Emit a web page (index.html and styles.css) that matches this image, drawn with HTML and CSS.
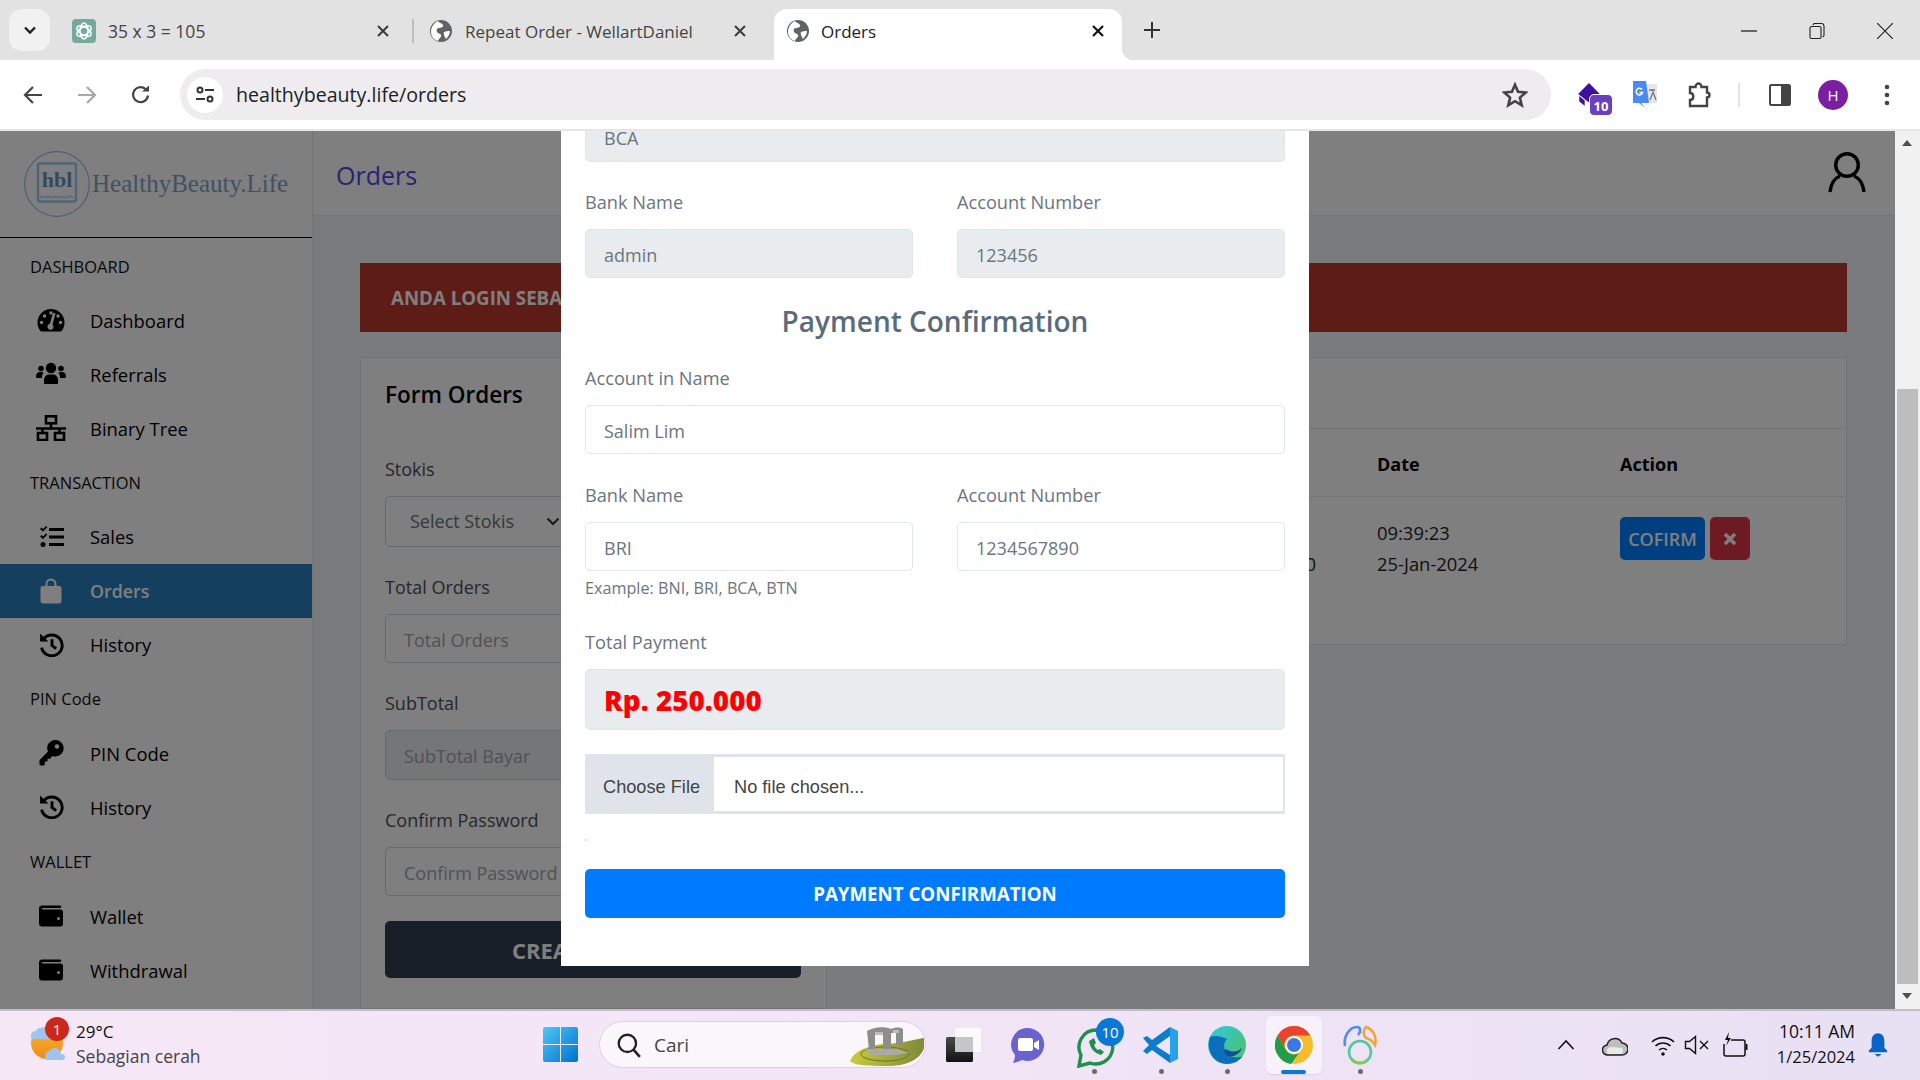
FILE: index.html
```html
<!DOCTYPE html>
<html lang="en">
<head>
<meta charset="utf-8">
<title>Orders</title>
<link rel="stylesheet" href="styles.css">
</head>
<body>
<svg class="defs" width="0" height="0" aria-hidden="true">
  <symbol id="globe" viewBox="0 0 24 24"><circle cx="12" cy="12" r="11" fill="#5f6368"/><path d="M9 2c1 2 4 2 5 4s-2 3-4 3-3 2-2 4 3 1 4 3-2 3-3 6c-4-1-7-5-7-9 0-5 3-9 7-11zM15 13c2-1 4-1 6-1 0 3-2 6-4 8-1-2-3-5-2-7z" fill="#fff"/></symbol>
  <symbol id="i-gauge" viewBox="0 0 28 24"><path d="M14 1A13.500 13.500 0 0 0 .500 14.500c0 3 .9 5.800 2.500 8.100.4.500 1 .9 1.700.9h18.600c.7 0 1.300-.4 1.700-.9 1.600-2.300 2.500-5.100 2.500-8.100A13.500 13.500 0 0 0 14 1z" fill="#000"/><g fill="#fff"><circle cx="14" cy="5" r="1.700"/><circle cx="7.500" cy="8" r="1.700"/><circle cx="4.500" cy="14.500" r="1.700"/><circle cx="23.500" cy="14.500" r="1.700"/><circle cx="21" cy="8" r="1.700"/><path d="M18.500 5.500l-3 11a3 3 0 1 1-2.600-.7l3.100-11z"/></g></symbol>
  <symbol id="i-users" viewBox="0 0 30 22"><g fill="#000"><circle cx="15" cy="6" r="5.200"/><circle cx="5" cy="6.500" r="2.800"/><circle cx="25" cy="6.500" r="2.800"/><path d="M8 21v-3c0-3.500 2.500-5.500 5-5.500h4c2.500 0 5 2 5 5.500v3c0 .6-.4 1-1 1H9c-.6 0-1-.4-1-1z"/><path d="M7.500 11c-1.300 1.300-1.500 3-1.500 5H1.500C.5 16 0 15.500 0 14.500 0 12 1.500 10 4 10h2c.6 0 1 .4 1.500 1zM22.500 11c1.300 1.300 1.500 3 1.500 5h4.500c1 0 1.500-.5 1.500-1.500 0-2.500-1.500-4.500-4-4.500h-2c-.6 0-1 .4-1.500 1z"/></g></symbol>
  <symbol id="i-tree" viewBox="0 0 30 26"><g fill="none" stroke="#000" stroke-width="2.600"><rect x="10" y="1.300" width="10" height="7"/><rect x="2" y="18" width="9" height="7"/><rect x="19" y="18" width="9" height="7"/><path d="M15 8v5M0 13.500h30M6.500 13.500V18M23.500 13.500V18"/></g></symbol>
  <symbol id="i-tasks" viewBox="0 0 26 22"><g fill="#000"><path d="M1 3l1.500-1.500L4 3l3-3 1.300 1.300L4 5.600z"/><rect x="10" y="2" width="15" height="3"/><rect x="10" y="9.500" width="15" height="3"/><rect x="10" y="17" width="15" height="3"/><path d="M1 10.500l1.500-1.500L4 10.500l3-3 1.300 1.300L4 13z"/><circle cx="4" cy="18.500" r="2.500"/></g></symbol>
  <symbol id="i-bag" viewBox="0 0 22 26"><path d="M2.500 8h17c1 0 2 1 2 2v13c0 1.500-1 2.500-2.500 2.500H3C1.500 25.500.5 24.500.5 23V10c0-1 1-2 2-2z" fill="#fff"/><path d="M6.500 11V6a4.500 4.500 0 0 1 9 0v5" fill="none" stroke="#fff" stroke-width="2"/></symbol>
  <symbol id="i-history" viewBox="0 0 24 24"><path d="M4.500 6.500A10 10 0 1 1 2.500 15" fill="none" stroke="#000" stroke-width="2.800"/><path d="M1 1.500l8 7.500H1z" fill="#000"/><path d="M12.500 7v6l4 3" fill="none" stroke="#000" stroke-width="2.800"/></symbol>
  <symbol id="i-key" viewBox="0 0 24 26"><path d="M16 0a8 8 0 0 1 0 16.500c-1 0-2-.2-3-.6l-2.500 2.800H8v2.800H5.300v2.800c0 .7-.5 1.200-1.200 1.200H1.200C.5 25.500 0 25 0 24.300v-3.500c0-.4.100-.7.400-1L8.500 11.500A8 8 0 0 1 16 0z" fill="#000"/><circle cx="17.500" cy="6.500" r="2.200" fill="#fff"/></symbol>
  <symbol id="i-wallet" viewBox="0 0 24 22"><path d="M3 .5h18c.8 0 1.300.6 1.300 1.300s-.5 1.200-1.300 1.200H3.500c-.6 0-.6 1.500 0 1.500H21.500c1.400 0 2.500 1 2.500 2.500v12c0 1.400-1 2.500-2.500 2.500H3c-1.700 0-3-1.300-3-3V3.500C0 1.800 1.300.5 3 .5z" fill="#000"/><circle cx="19.500" cy="13.500" r="1.500" fill="#fff"/></symbol>
</svg>

<div class="browser">
  <header class="tabstrip">
    <button class="tab-menu"><svg width="14" height="9" viewBox="0 0 14 9"><path d="M2 1.500l5 5 5-5" fill="none" stroke="#222" stroke-width="2.400"/></svg></button>
    <div class="tab tab-one">
      <svg class="fav" viewBox="0 0 24 24"><rect width="24" height="24" rx="4" fill="#74aa9c"/><g fill="none" stroke="#fff" stroke-width="1.500"><ellipse cx="12" cy="12" rx="4" ry="8"/><ellipse cx="12" cy="12" rx="4" ry="8" transform="rotate(60 12 12)"/><ellipse cx="12" cy="12" rx="4" ry="8" transform="rotate(120 12 12)"/></g></svg>
      <span class="tab-title">35 x 3 = 105</span>
      <svg class="tab-x" viewBox="0 0 14 14"><path d="M2 2l10 10M12 2L2 12" stroke="#3c3c3c" stroke-width="2"/></svg>
    </div>
    <div class="tab tab-two">
      <svg class="fav"><use href="#globe"/></svg>
      <span class="tab-title">Repeat Order - WellartDaniel</span>
      <svg class="tab-x" viewBox="0 0 14 14"><path d="M2 2l10 10M12 2L2 12" stroke="#3c3c3c" stroke-width="2"/></svg>
    </div>
    <div class="tab tab-active">
      <svg class="fav"><use href="#globe"/></svg>
      <span class="tab-title">Orders</span>
      <svg class="tab-x" viewBox="0 0 14 14"><path d="M2 2l10 10M12 2L2 12" stroke="#111" stroke-width="2.200"/></svg>
    </div>
    <svg class="tab-plus" viewBox="0 0 18 18"><path d="M9 1v16M1 9h16" stroke="#333" stroke-width="2"/></svg>
    <div class="win-controls">
      <svg viewBox="0 0 16 16" width="16" height="16"><path d="M0 8h16" stroke="#222" stroke-width="1.300"/></svg>
      <svg viewBox="0 0 16 16" width="16" height="16"><path d="M2.500 3.500h8a1.500 1.500 0 0 1 1.500 1.500v9a1.500 1.500 0 0 1-1.500 1.500h-8A1.500 1.500 0 0 1 1 14V5a1.500 1.500 0 0 1 1.500-1.500zM4 2a2 2 0 0 1 2-1.500h6.500A2.500 2.500 0 0 1 15 3v9a2 2 0 0 1-1.500 2" fill="none" stroke="#222" stroke-width="1.100"/></svg>
      <svg viewBox="0 0 16 16" width="16" height="16"><path d="M0 0l16 16M16 0L0 16" stroke="#222" stroke-width="1.200"/></svg>
    </div>
  </header>

  <nav class="toolbar">
    <div class="nav-btns">
      <svg viewBox="0 0 20 20" width="20" height="20"><path d="M19 10H3M10 2l-8 8 8 8" fill="none" stroke="#444" stroke-width="2.200"/></svg>
      <svg viewBox="0 0 20 20" width="20" height="20"><path d="M1 10h16M10 2l8 8-8 8" fill="none" stroke="#a8a8a8" stroke-width="2.200"/></svg>
      <svg viewBox="0 0 20 20" width="20" height="20"><path d="M17 10.500A7.500 7.500 0 1 1 14.500 4" fill="none" stroke="#444" stroke-width="2.200"/><path d="M11 6.500h7v-6z" fill="#444"/></svg>
    </div>
    <div class="omnibox">
      <span class="site-icon"><svg viewBox="0 0 20 20" width="20" height="20"><g fill="none" stroke="#333" stroke-width="2"><circle cx="5" cy="5" r="2.500"/><path d="M10 5h9M1 14h9"/><circle cx="15" cy="14" r="2.500"/></g></svg></span>
      <span class="url">healthybeauty.life/orders</span>
      <svg class="star" viewBox="0 0 24 24" width="26" height="26"><path d="M12 2.500l2.800 6.600 7.200.6-5.500 4.700 1.700 7-6.200-3.700-6.200 3.700 1.700-7L2 9.700l7.200-.6z" fill="none" stroke="#444" stroke-width="2.400"/></svg>
    </div>
    <div class="ext">
      <span class="ext-item ext-grad"><svg viewBox="0 0 24 24" width="26" height="26"><path d="M12 1l10 10-10 8-10-8z" fill="#3f0f9e"/><path d="M3 13l5 4v5l-5-4z" fill="#3f0f9e"/></svg><span class="ext-badge">10</span></span>
      <span class="ext-item ext-gt"><svg viewBox="0 0 26 30" width="26" height="30"><path d="M14 4h11v19H14z" fill="#e6e6e6"/><path d="M17 10h6M20 9v2M18 20l3-8 3 8" fill="none" stroke="#777" stroke-width="1.300"/><path d="M1 1h13l3 22H9l4 5-6-5H1z" fill="#4a8af4"/><path d="M10 9.500a3.300 3.300 0 1 0 .6 3H7.500" fill="none" stroke="#fff" stroke-width="1.500"/></svg></span>
      <span class="ext-item ext-puzzle"><svg viewBox="0 0 26 28" width="26" height="28"><path d="M3 6h5.500c0-2 1.500-3.500 3-3.500S14.500 4 14.500 6H20v5.500c2 0 2.500 1.200 2.500 2.500S22 16.500 20 16.500V25H3v-6c2 0 3.300-1.500 3.300-3.500S5 12 3 12z" fill="none" stroke="#444" stroke-width="2.400"/></svg></span>
      <span class="ext-sep"></span>
      <span class="ext-item ext-panel"><svg viewBox="0 0 22 22" width="22" height="22"><rect x="1" y="1" width="20" height="20" rx="1.500" fill="none" stroke="#444" stroke-width="2"/><rect x="12" y="1" width="9" height="20" fill="#444"/></svg></span>
      <span class="avatar">H</span>
      <svg class="dots" viewBox="0 0 6 22" width="6" height="22"><g fill="#444"><circle cx="3" cy="3" r="2.300"/><circle cx="3" cy="11" r="2.300"/><circle cx="3" cy="19" r="2.300"/></g></svg>
    </div>
  </nav>

  <div class="viewport">
    <aside class="sidebar">
      <div class="brand">
        <svg class="brand-logo" viewBox="0 0 66 66" width="66" height="66"><circle cx="33" cy="33" r="32.300" fill="none" stroke="#8fc0ea" stroke-width="1.200"/><rect x="14" y="12.500" width="38" height="38" rx="2" fill="none" stroke="#9ccbf0" stroke-width="2.400"/></svg>
        <span class="brand-mark">hbl</span>
        <span class="brand-tiny">healthybeauty.life</span>
        <span class="brand-name">HealthyBeauty.Life</span>
      </div>
      <div class="menu">
        <div class="menu-label">DASHBOARD</div>
        <a class="menu-item"><svg class="mi mi-gauge"><use href="#i-gauge"/></svg>Dashboard</a>
        <a class="menu-item"><svg class="mi mi-users"><use href="#i-users"/></svg>Referrals</a>
        <a class="menu-item"><svg class="mi mi-tree"><use href="#i-tree"/></svg>Binary Tree</a>
        <div class="menu-label">TRANSACTION</div>
        <a class="menu-item"><svg class="mi mi-tasks"><use href="#i-tasks"/></svg>Sales</a>
        <a class="menu-item is-active"><svg class="mi mi-bag"><use href="#i-bag"/></svg>Orders</a>
        <a class="menu-item"><svg class="mi mi-hist"><use href="#i-history"/></svg>History</a>
        <div class="menu-label">PIN Code</div>
        <a class="menu-item"><svg class="mi mi-key"><use href="#i-key"/></svg>PIN Code</a>
        <a class="menu-item"><svg class="mi mi-hist"><use href="#i-history"/></svg>History</a>
        <div class="menu-label">WALLET</div>
        <a class="menu-item"><svg class="mi mi-wallet"><use href="#i-wallet"/></svg>Wallet</a>
        <a class="menu-item"><svg class="mi mi-wallet"><use href="#i-wallet"/></svg>Withdrawal</a>
      </div>
    </aside>

    <main class="main">
      <div class="page-head">
        <h1 class="page-title">Orders</h1>
        <svg class="user-icon" viewBox="0 0 38 42" width="38" height="42"><g fill="none" stroke="#000" stroke-width="3.400"><circle cx="19" cy="13" r="11.300"/><path d="M2 40c1-8 5-14 10-16M36 40c-1-8-5-14-10-16"/></g></svg>
      </div>
      <div class="content">
        <div class="alert">ANDA LOGIN SEBAGAI ADMIN</div>
        <div class="cards">
          <section class="card card-form">
            <h2 class="card-title">Form Orders</h2>
            <label class="bg-label">Stokis</label>
            <div class="bg-input bg-select">Select Stokis<svg viewBox="0 0 14 9" width="14" height="9"><path d="M1.500 1.500L7 7l5.500-5.500" fill="none" stroke="#333" stroke-width="2"/></svg></div>
            <label class="bg-label">Total Orders</label>
            <div class="bg-input">Total Orders</div>
            <label class="bg-label">SubTotal</label>
            <div class="bg-input is-disabled">SubTotal Bayar</div>
            <label class="bg-label">Confirm Password</label>
            <div class="bg-input">Confirm Password</div>
            <button class="bg-submit">CREATE ORDER</button>
          </section>
          <section class="card card-table">
            <div class="table-top"></div>
            <div class="trow thead"><span></span><b>Date</b><b>Action</b></div>
            <div class="trow tbody">
              <span class="cell-total">250.000</span>
              <span class="cell-date">09:39:23<br>25-Jan-2024</span>
              <span class="cell-actions"><button class="btn-confirm">COFIRM</button><button class="btn-del"><svg viewBox="0 0 14 14" width="14" height="14"><path d="M2 2l10 10M12 2L2 12" stroke="#fff" stroke-width="3.600"/></svg></button></span>
            </div>
          </section>
        </div>
      </div>
    </main>

    <div class="scrollbar">
      <span class="sb-arrow sb-up"></span>
      <span class="sb-thumb"></span>
      <span class="sb-arrow sb-down"></span>
    </div>

    <div class="backdrop"></div>
    <div class="modal">
      <div class="modal-body">
        <div class="field"><div class="input ro clip-top">BCA</div></div>
        <div class="two">
          <div class="field"><label>Bank Name</label><div class="input ro">admin</div></div>
          <div class="field"><label>Account Number</label><div class="input ro">123456</div></div>
        </div>
        <h3 class="pay-heading">Payment Confirmation</h3>
        <div class="field field-acct"><label>Account in Name</label><div class="input">Salim Lim</div></div>
        <div class="two">
          <div class="field field-tight"><label>Bank Name</label><div class="input">BRI</div><small>Example: BNI, BRI, BCA, BTN</small></div>
          <div class="field field-tight"><label>Account Number</label><div class="input">1234567890</div></div>
        </div>
        <div class="field field-total"><label>Total Payment</label><div class="input ro total">Rp. 250.000</div></div>
        <div class="file"><span class="file-btn">Choose File</span><span class="file-name">No file chosen...</span></div>
        <div class="file-dot"></div>
        <button class="pay-btn">PAYMENT CONFIRMATION</button>
      </div>
    </div>
  </div>

  <footer class="taskbar">
    <div class="weather">
      <span class="weather-icon">
        <svg viewBox="0 0 40 44" width="40" height="44"><defs><linearGradient id="sun" x1="0" y1="0" x2="0" y2="1"><stop offset="0" stop-color="#f7b92e"/><stop offset="1" stop-color="#ef8a1a"/></linearGradient></defs><circle cx="20" cy="20" r="16" fill="url(#sun)"/><path d="M4 13c0-3 2-5 5-5 1-3 4-4 7-3 3 1 4 3 4 5 3 0 4 2 4 4 0 1-1 2-2 2H6c-1 0-2-1-2-3z" fill="#9fc3ec"/><path d="M18 33c0-3 2-5 5-5 1-3 5-4 8-2 2 1 3 3 3 5 3 0 4 1 4 3s-1 3-3 3H20c-1 0-2-2-2-4z" fill="#9fc3ec"/></svg>
        <span class="weather-badge">1</span>
      </span>
      <div class="weather-text"><span class="temp">29°C</span><span class="cond">Sebagian cerah</span></div>
    </div>
    <svg class="win-logo" viewBox="0 0 35 35" width="35" height="35"><defs><linearGradient id="wg" x1="0" y1="0" x2="1" y2="1"><stop offset="0" stop-color="#4cc9f5"/><stop offset="1" stop-color="#0071d0"/></linearGradient></defs><path d="M0 2a2 2 0 0 1 2-2h15v17H0zM18 0h15a2 2 0 0 1 2 2v15H18zM0 18h17v17H2a2 2 0 0 1-2-2zM18 18h17v15a2 2 0 0 1-2 2H18z" fill="url(#wg)"/></svg>
    <div class="search">
      <svg viewBox="0 0 24 24" width="26" height="26"><circle cx="10.500" cy="10.500" r="8" fill="none" stroke="#222" stroke-width="2.200"/><path d="M16 16l6 7" stroke="#222" stroke-width="2.400"/></svg>
      <span class="search-text">Cari</span>
      <svg class="search-art" viewBox="0 0 76 42" width="76" height="42"><defs><linearGradient id="gr" x1="0" y1="0" x2="1" y2="0"><stop offset="0" stop-color="#c8cc3a"/><stop offset="1" stop-color="#7f8a38"/></linearGradient></defs><path d="M1 36c4-10 18-16 36-17 12 0 26-4 38-6v10c-4 12-18 18-36 18C22 41 6 41 1 36z" fill="url(#gr)"/><ellipse cx="36" cy="29" rx="24" ry="7" fill="none" stroke="#6f7230" stroke-width="1"/><path d="M18 6c6-4 18-5 24-2 4-2 10-2 12 0v16h-7V8h-5v16H34V9h-8v15l-6 1z" fill="#8d8d8a"/><path d="M14 24h34l12 4-14 2H24z" fill="#a9a9a6"/><path d="M26 7h8v3h-8zM44 5h6v3h-6z" fill="#bdbdb9"/></svg>
    </div>
    <div class="apps">
      <span class="app app-plain app-stack"><svg viewBox="0 0 36 34" width="36" height="34"><defs><linearGradient id="blk" x1="0" y1="0" x2="0" y2="1"><stop offset="0" stop-color="#4a4a4a"/><stop offset="1" stop-color="#111"/></linearGradient></defs><rect x="0" y="9" width="27" height="25" rx="1.500" fill="url(#blk)"/><rect x="9" y="0" width="26" height="24" rx="1.500" fill="#fafafa"/><rect x="9" y="9" width="18" height="15" fill="#c6c6c6"/></svg></span>
      <span class="app app-plain"><svg viewBox="0 0 34 36" width="34" height="36"><path d="M17 1a16.500 16.500 0 1 1-6 32c-2 1-6 2.500-9 3 1-2 2-5 2-8A16.500 16.500 0 0 1 17 1z" fill="#6a62cf"/><path d="M9 11h11a2 2 0 0 1 2 2v9a2 2 0 0 1-2 2H9a2 2 0 0 1-2-2v-9a2 2 0 0 1 2-2zM23 16l5-3v10l-5-3z" fill="#fff"/></svg></span>
      <span class="app app-wa"><svg viewBox="0 0 40 46" width="40" height="46"><path d="M20 8a17 17 0 0 0-15 25L3 44l11-3a17 17 0 1 0 6-33z" fill="none" stroke="#1f8f4f" stroke-width="3.400"/><path d="M13 19c1 7 5 12 12 14l3-3-4-3-2 1c-2-1-3-3-4-5l2-2-2-5z" fill="#1f8f4f"/></svg><span class="app-badge">10</span></span>
      <span class="app"><svg viewBox="0 0 36 38" width="36" height="38"><path d="M27 1l8 4v28l-8 4z" fill="#26a3e8"/><path d="M27 1v9L13 20l14 9v8L9 24l-5 4-4-3 6-6-6-7 4-2 5 4z" fill="#0d7cc9"/></svg></span>
      <span class="app"><svg viewBox="0 0 38 40" width="38" height="40"><defs><linearGradient id="eg" x1="0" y1="0" x2="1" y2="1"><stop offset="0" stop-color="#2ec8de"/><stop offset="1" stop-color="#54c15f"/></linearGradient></defs><circle cx="19" cy="20" r="19" fill="url(#eg)"/><path d="M2 12c-4 12 2 26 16 27 8 0 13-3 17-8-6 3-14 1-17-4-3-5-2-10 1-13-6-3-13-4-17-2z" fill="#0c6fbe"/><path d="M20 25c5 3 11 1 14-2-3 9-15 11-18 4-1-2 2-3 4-2z" fill="#0d4f99"/></svg></span>
      <span class="app app-active"><svg viewBox="0 0 38 38" width="38" height="38"><circle cx="19" cy="19" r="19" fill="#f5bd2c"/><path d="M19 0a19 19 0 0 1 16.500 9.500H19A9.500 9.500 0 0 0 10.800 24L2.500 9.500A19 19 0 0 1 19 0z" fill="#e8432e"/><path d="M2.500 9.500L10.800 24A9.500 9.500 0 0 0 24 27l-8 11A19 19 0 0 1 2.500 9.500z" fill="#1f9d4a"/><circle cx="19" cy="19" r="9" fill="#fff"/><circle cx="19" cy="19" r="7" fill="#3b78e7"/></svg><span class="app-line"></span></span>
      <span class="app"><svg viewBox="0 0 36 40" width="36" height="40"><g fill="none" stroke-width="2.600"><path d="M3 21C1 11 8 2 15 2c4 0 4 5 1 8" stroke="#4f8cf0"/><path d="M24 2c7 2 11 10 9 18-2-3-5-6-9-7-3-3-3-8 0-11z" stroke="#f2a33a"/><circle cx="18" cy="27" r="11" stroke="#52c7a0"/><path d="M10 35c4 4 11 4 15 1" stroke="#7ed04a"/></g></svg></span>
    </div>
    <div class="tray">
      <svg class="t-up" viewBox="0 0 18 11" width="18" height="11"><path d="M1.500 10L9 2l7.500 8" fill="none" stroke="#111" stroke-width="1.600"/></svg>
      <svg class="t-cloud" viewBox="0 0 26 22" width="26" height="22"><path d="M6 21a5 5 0 0 1-1-10A8 8 0 0 1 20 9a6 6 0 0 1 0 12z" fill="#bdbdbd" stroke="#222" stroke-width="1.500"/><path d="M6 20a5 5 0 0 1 0-6c4-2 9 0 14 0a5 5 0 0 1 0 6z" fill="#e9e9e9"/></svg>
      <svg class="t-wifi" viewBox="0 0 24 22" width="24" height="22"><g fill="none" stroke="#111" stroke-width="1.600"><path d="M1 8a16 16 0 0 1 22 0M4.500 12a11 11 0 0 1 15 0M8 16a6 6 0 0 1 8 0"/></g><circle cx="12" cy="20" r="1.800" fill="#111"/></svg>
      <svg class="t-mute" viewBox="0 0 26 22" width="26" height="22"><path d="M1.500 7.500h4l6-5v17l-6-5h-4z" fill="none" stroke="#111" stroke-width="1.400"/><path d="M16 7l8 8M24 7l-8 8" stroke="#111" stroke-width="1.400"/></svg>
      <svg class="t-batt" viewBox="0 0 26 26" width="26" height="26"><path d="M9 8h12a2 2 0 0 1 2 2v12a2 2 0 0 1-2 2H4a2 2 0 0 1-2-2v-10" fill="none" stroke="#111" stroke-width="1.500"/><path d="M23.500 12h2v6h-2zM7 0L3 8h3l-2 6 5-8H6z" fill="#111"/></svg>
      <div class="clock"><span class="clock-t">10:11 AM</span><span class="clock-d">1/25/2024</span></div>
      <svg class="bell" viewBox="0 0 22 28" width="20" height="26"><path d="M11 1c5 0 7 4 7 9v7l3 3v2H1v-2l3-3v-7c0-5 2-9 7-9z" fill="#0a63c9"/><path d="M7 24h8l-4 3z" fill="#0a63c9"/></svg>
    </div>
  </footer>
</div>
</body>
</html>
```

FILE: styles.css
```css
* { box-sizing: border-box; }
html, body { margin: 0; height: 100%; overflow: hidden; }
body { font-family: "Open Sans", "Noto Sans", sans-serif; color: #212529; background: #fff; }
.defs { position: absolute; }
button { font-family: inherit; border: 0; padding: 0; }
svg { display: block; flex: none; }

.browser { display: flex; flex-direction: column; width: 1920px; height: 1080px; }

/* tab strip */
.tabstrip { height: 60px; flex: none; background: #e2e2e2; display: flex; align-items: flex-end; padding-left: 9px; }
.tab-menu { width: 41px; height: 42px; margin-bottom: 9px; margin-right: 10px; border-radius: 13px; background: #f1f1f1; display: flex; align-items: center; justify-content: center; }
.tab { height: 51px; display: flex; align-items: center; font-size: 17.500px; color: #444; padding-bottom: 7px; }
.fav { width: 24px; height: 24px; }
.tab-x { width: 14px; height: 14px; }
.tab-title { flex: 1; white-space: nowrap; }
.tab-one { width: 352px; padding-left: 12px; }
.tab-one .tab-title { margin-left: 12px; }
.tab-one .tab-x { margin-right: 22px; }
.tab-two { width: 362px; padding-left: 17px; position: relative; font-size: 17px; }
.tab-two::before { content: ""; position: absolute; left: 0; top: 10px; height: 24px; width: 2px; background: #bdbdbd; }
.tab-two .tab-title { margin-left: 12px; }
.tab-two .tab-x { margin-right: 27px; }
.tab-active { width: 348px; padding-left: 12px; background: #fff; border-radius: 13px 13px 0 0; color: #222; position: relative; font-size: 17px; }
.tab-active .tab-title { margin-left: 11px; }
.tab-active .tab-x { margin-right: 17px; }
.tab-active::after { content: ""; position: absolute; left: 100%; bottom: 0; width: 12px; height: 12px; background: radial-gradient(circle at 100% 0, transparent 12px, #fff 12.500px); }
.tab-plus { width: 18px; height: 18px; margin: 0 0 21px 21px; }
.win-controls { margin-left: auto; display: flex; align-items: center; gap: 52px; width: 153px; margin-bottom: 21px; margin-right: 26px; }

/* toolbar */
.toolbar { height: 71px; flex: none; background: #fff; border-bottom: 2px solid #e6e6e6; border-radius: 12px 12px 0 0; display: flex; align-items: center; position: relative; }
.nav-btns { width: 180px; padding-left: 23px; display: flex; gap: 34px; }
.omnibox { width: 1371px; height: 51px; background: #eeecee; border-radius: 26px; display: flex; align-items: center; padding-left: 7px; }
.site-icon { width: 36px; height: 36px; border-radius: 50%; background: #fff; display: flex; align-items: center; justify-content: center; }
.url { margin-left: 13px; font-size: 19.600px; color: #202124; flex: 1; }
.star { margin-right: 23px; }
.ext { flex: 1; display: flex; align-items: center; position: relative; height: 50px; }
.ext-item { position: absolute; display: block; top: 10px; }
.ext-grad { left: 25px; top: 12px; }
.ext-gt { left: 81px; }
.ext-puzzle { left: 136px; top: 11px; }
.ext-sep { position: absolute; left: 187px; top: 13px; width: 2px; height: 24px; background: #e3e3e3; }
.ext-panel { left: 218px; top: 14px; }
.ext-badge { position: absolute; left: 13px; top: 12px; width: 24px; height: 22px; border-radius: 5px; background: #6a3fc0; color: #fff; font: 700 13px/22px "Open Sans", sans-serif; text-align: center; border: 1px solid #fff; }
.avatar { position: absolute; left: 267px; top: 10px; width: 30px; height: 30px; border-radius: 50%; background: #7b1fa2; color: #fff; font-size: 15px; line-height: 30px; text-align: center; }
.dots { position: absolute; left: 333px; top: 14px; }

/* viewport */
.viewport { height: 878px; flex: none; display: flex; position: relative; }
.sidebar { width: 313px; flex: none; background: #fff; border-right: 1px solid #e8e8e8; display: flex; flex-direction: column; }
.brand { height: 107px; flex: none; border-bottom: 1px solid #000; display: flex; align-items: center; padding: 0 0 0 24px; position: relative; }
.brand-mark { position: absolute; left: 37px; top: 36px; width: 40px; text-align: center; font: 700 22px/26px "Liberation Serif", serif; color: #6892bc; }
.brand-tiny { position: absolute; left: 37px; top: 63px; width: 40px; text-align: center; font-size: 4px; line-height: 6px; color: #6892bc; white-space: nowrap; }
.brand-name { margin: 0 0 2px 2px; font: 400 25px/1 "Liberation Serif", serif; color: #7fa3c4; white-space: nowrap; }
.menu { display: flex; flex-direction: column; padding-top: 11px; }
.menu-label { height: 39px; padding-left: 30px; font-size: 16.500px; line-height: 36px; color: #111; margin-bottom: 6px; }
.menu-label:first-child { margin-bottom: 5px; }
.menu-item { height: 54px; display: flex; align-items: center; font-size: 18.400px; font-weight: 500; color: #000; position: relative; padding-left: 90px; }
.menu-item + .menu-label { margin-top: 9.700px; }
.menu-item.is-active { background: #287fbc; color: #fff; font-weight: 600; font-size: 17.800px; }
.mi { position: absolute; }
.mi-gauge { left: 37px; top: 15px; width: 28px; height: 24px; }
.mi-users { left: 36px; top: 15px; width: 30px; height: 22px; }
.mi-tree { left: 36px; top: 14px; width: 30px; height: 26px; }
.mi-tasks { left: 39px; top: 16px; width: 26px; height: 22px; }
.mi-bag { left: 40px; top: 14px; width: 22px; height: 26px; }
.mi-hist { left: 39px; top: 14px; width: 25px; height: 25px; }
.mi-key { left: 39px; top: 14px; width: 25px; height: 26px; }
.mi-wallet { left: 39px; top: 16px; width: 24px; height: 22px; }

.main { flex: 1; min-width: 0; background: #f4f6fa; display: flex; flex-direction: column; }
.page-head { height: 85px; flex: none; background: #fff; border-bottom: 1px solid #e9e9e9; display: flex; align-items: center; justify-content: space-between; padding: 0 29px 0 23px; }
.page-title { margin: 3px 0 0; font-size: 25px; font-weight: 400; color: #4848e8; }
.content { padding: 47px 48px 0 47px; }
.alert { height: 69px; background: #bc382c; color: #fff; font-size: 18.700px; font-weight: 700; line-height: 69px; padding-left: 31px; white-space: nowrap; }
.cards { display: flex; gap: 22px; margin-top: 25px; align-items: flex-start; }
.card { background: #fff; border: 1px solid #e4e6e8; }
.card-form { width: 467px; flex: none; padding: 20px 25px 30px 24px; }
.card-title { margin: 0 0 44px; font-size: 22.500px; font-weight: 600; line-height: 34px; color: #000; }
.bg-label { display: block; font-size: 18px; line-height: 27px; color: #495057; margin-bottom: 13px; }
.bg-input { height: 49px; border: 1px solid #ced4da; border-radius: 5px; padding-left: 18px; margin-bottom: 27px; font-size: 18px; line-height: 50px; color: #9ea5ab; background: #fff; white-space: nowrap; overflow: hidden; }
.bg-select { height: 51px; line-height: 51px; padding-left: 24px; color: #6a7178; margin-bottom: 27px; display: flex; align-items: center; }
.bg-select svg { margin-left: 32px; }
.bg-input.is-disabled { background: #e9ecef; height: 50px; }
.bg-submit { display: block; width: 100%; height: 57px; margin-top: -2px; background: #323f52; color: #fff; border-radius: 5px; font-size: 22px; font-weight: 700; }
.card-table { flex: 1; height: 288px; }
.table-top { height: 71px; border-bottom: 1px solid #e7e8e9; }
.trow { display: grid; grid-template-columns: 527px 243px 1fr; }
.thead { height: 68px; align-items: center; padding-top: 2px; border-bottom: 1px solid #e7e8e9; font-size: 18px; color: #000; }
.thead b { font-weight: 700; }
.tbody { padding-top: 20px; font-size: 18.400px; }
.cell-total { text-align: right; padding-right: 61px; margin-top: 31px; line-height: 31px; }
.cell-date { line-height: 31px; color: #212529; }
.cell-actions { display: flex; gap: 5px; align-items: flex-start; }
.btn-confirm { width: 85px; height: 43px; background: #007eff; color: #fff; border-radius: 5px; font-size: 18px; font-weight: 600; }
.btn-del { width: 40px; height: 43px; background: #dc3545; border-radius: 5px; display: flex; align-items: center; justify-content: center; }

.scrollbar { width: 25px; flex: none; background: #f1f1f1; position: relative; }
.sb-thumb { position: absolute; left: 2px; top: 258px; width: 21px; height: 595px; background: #bdbdbd; }
.sb-arrow { position: absolute; left: 7px; width: 0; height: 0; border-left: 5.500px solid transparent; border-right: 5.500px solid transparent; }
.sb-up { top: 9px; border-bottom: 6px solid #505050; }
.sb-down { top: 862px; border-top: 6px solid #505050; }

.backdrop { position: absolute; left: 0; top: 0; width: 1895px; height: 100%; background: rgba(0, 0, 0, .5); }
.modal { position: absolute; left: 561px; top: 0; width: 748px; height: 835px; background: #fff; }
.modal-body { padding: 0 24px; }
.two { display: grid; grid-template-columns: 1fr 1fr; gap: 44px; }
.field { margin-bottom: 27px; }
.field-acct { margin-bottom: 28px; }
.field label { display: block; font-size: 18.200px; line-height: 27px; margin-bottom: 13px; color: #6a7580; }
.input { height: 49px; border: 1px solid #e2e6ea; border-radius: 5px; padding-left: 18px; font-size: 18px; line-height: 50px; color: #6a7580; }
.ro { background: #e9ecef; }
.clip-top { height: 31px; border-top: 0; border-radius: 0 0 5px 5px; line-height: 15px; }
.field small { display: block; margin-top: 6px; font-size: 16.200px; line-height: 22px; color: #6c757d; }
.pay-heading { margin: -1px 0 27px; font-size: 28px; line-height: 34px; font-weight: 600; text-align: center; color: #5a6b7b; }
.field-tight { margin-bottom: 0; }
.field-total { margin-top: 30px; margin-bottom: 24px; }
.total { height: 61px; line-height: 60px; color: #f00; font-size: 27.800px; font-weight: 800; }
.file { height: 60px; border: 3px solid #dee4ea; border-right-width: 2px; display: flex; font-family: "Liberation Sans", Arial, sans-serif; font-size: 18.200px; color: #444; }
.file-btn { width: 129px; padding-left: 18px; background: #dee4ea; margin: -3px 0 -3px -3px; line-height: 66px; flex: none; }
.file-name { padding-left: 20px; line-height: 60px; }
.file-dot { width: 2px; height: 2px; background: #dddddd; margin: 25px 0 28px; }
.pay-btn { display: block; width: 100%; height: 49px; background: #007bff; color: #fff; border-radius: 5px; font-size: 18.700px; font-weight: 700; }

/* taskbar */
.taskbar { height: 71px; flex: none; background: linear-gradient(90deg, #f6e7f6, #f3e6f6 40%, #e8e0f3); border-top: 2px solid #c4bccb; padding-bottom: 2px; display: flex; align-items: center; position: relative; }
.weather { width: 543px; flex: none; display: flex; align-items: center; padding-left: 27px; }
.weather-icon { position: relative; display: block; width: 40px; height: 44px; }
.weather-badge { position: absolute; left: 18px; top: -6px; width: 24px; height: 24px; border-radius: 50%; background: #c9281b; color: #fff; font-size: 15px; line-height: 24px; text-align: center; }
.weather-text { margin-left: 9px; display: flex; flex-direction: column; font-size: 17.500px; line-height: 25px; padding-bottom: 1px; }
.temp { color: #111; font-size: 17px; }
.cond { color: #444; }
.search { width: 327px; height: 47px; margin-left: 21px; border-radius: 24px; background: #faf6fc; border: 1px solid #dccfe2; display: flex; align-items: center; padding-left: 16px; position: relative; }
.search-text { margin-left: 12px; font-size: 19px; color: #444; }
.search-art { position: absolute; right: 0; top: 3px; }
.apps { display: flex; margin-left: 2px; }
.app { width: 66.500px; height: 69px; display: flex; align-items: center; justify-content: center; position: relative; }
.app-stack { padding-left: 5px; }
.app-wa { padding-left: 3px; }
.app-wa .app-badge { position: absolute; left: 35px; top: 8px; width: 28px; height: 28px; border-radius: 50%; background: #0a78d6; color: #fff; font-size: 15px; line-height: 28px; text-align: center; }
.app-active::before { content: ""; position: absolute; left: 5px; right: 5px; top: 6px; bottom: 5px; border-radius: 6px; background: #f6f1fa; box-shadow: 0 1px 1px #d9d0e0; }
.app-active svg { position: relative; }
.app-line { position: absolute; left: 20px; bottom: 5px; width: 25px; height: 4px; border-radius: 2px; background: #0a78d6; }
.app:not(.app-active):not(.app-plain)::after { content: ""; position: absolute; left: 31px; bottom: 5px; width: 5px; height: 5px; border-radius: 50%; background: #6a6a6a; }
.tray { position: absolute; right: 32px; top: 0; height: 67px; display: flex; align-items: center; }
.t-cloud { margin-left: 27px; }
.t-wifi { margin-left: 23px; }
.t-mute { margin-left: 9px; }
.t-batt { margin-left: 12px; }
.clock { width: 107px; display: flex; flex-direction: column; align-items: flex-end; line-height: 25px; color: #111; padding-bottom: 1px; }
.clock-t { font-size: 17.500px; }
.clock-d { font-size: 16.500px; }
.bell { margin-left: 13px; }
```
